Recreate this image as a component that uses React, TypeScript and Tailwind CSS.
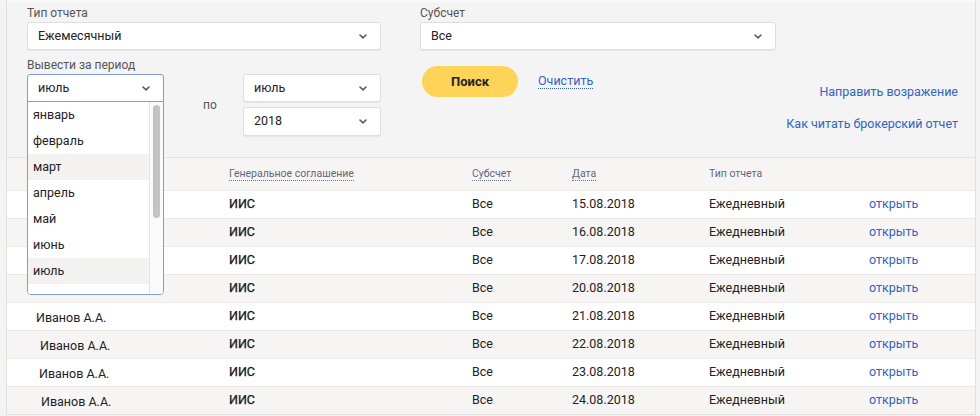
import React from 'react';

const Chevron: React.FC = () => (
  <svg width="8" height="5" viewBox="0 0 8 5" className="shrink-0">
    <path d="M1 1l3 2.8L7 1" fill="none" stroke="#5a5a5a" strokeWidth="1.6" strokeLinecap="round" strokeLinejoin="round" />
  </svg>
);

interface SelectProps {
  value: string;
  className?: string;
  open?: boolean;
}

const Select: React.FC<SelectProps> = ({ value, className = '', open }) => (
  <div
    className={
      'flex items-center justify-between bg-white pl-[10px] pr-[13px] text-[12.5px] text-[#222] ' +
      (open
        ? 'border border-[#7d9dd3] rounded-t-[3px] '
        : 'border border-[#dedede] rounded-[3px] shadow-[0_1px_1px_rgba(0,0,0,0.06)] ') +
      className
    }
  >
    <span>{value}</span>
    <Chevron />
  </div>
);

const months = [
  { name: 'январь', hl: false },
  { name: 'февраль', hl: false },
  { name: 'март', hl: true },
  { name: 'апрель', hl: false },
  { name: 'май', hl: false },
  { name: 'июнь', hl: false },
  { name: 'июль', hl: true },
  { name: 'август', hl: false },
];

const rows = [
  { name: 'Иванов А.А.', pad: 'pl-[29px]', date: '15.08.2018' },
  { name: 'Иванов А.А.', pad: 'pl-[29px]', date: '16.08.2018' },
  { name: 'Иванов А.А.', pad: 'pl-[29px]', date: '17.08.2018' },
  { name: 'Иванов А.А.', pad: 'pl-[29px]', date: '20.08.2018' },
  { name: 'Иванов А.А.', pad: 'pl-[29px]', date: '21.08.2018' },
  { name: 'Иванов А.А.', pad: 'pl-[33px]', date: '22.08.2018' },
  { name: 'Иванов А.А.', pad: 'pl-[32px]', date: '23.08.2018' },
  { name: 'Иванов А.А.', pad: 'pl-[34px]', date: '24.08.2018' },
];

const cols = 'grid grid-cols-[222px_243px_100px_137px_160px_1fr] items-center';

const App: React.FC = () => {
  return (
    <div className="w-[980px] h-[416px] overflow-hidden bg-[#f3f3f3] font-['Roboto','Liberation_Sans',sans-serif]">
      <div className="ml-[6px] w-[970px] border-x border-[#e0e0e0] bg-[#f4f4f4]">
        {/* filters */}
        <div className="flex h-[157px] pl-[20px] pt-[3px] border-t-[2px] border-[#fafafa]">
          <div className="w-[354px] mr-[39px]">
            <div className="text-[12px] leading-[16px] text-[#555]">Тип отчета</div>
            <Select value="Ежемесячный" className="mt-[1px] h-[28px]" />
            <div className="mt-[7px] text-[12px] leading-[16px] text-[#555]">Вывести за период</div>
            <div className="flex mt-[1px]">
              <div className="relative w-[137px]">
                <Select value="июль" open className="h-[28px]" />
                <div className="absolute left-0 top-[27px] z-10 w-[137px] h-[194px] overflow-hidden rounded-b-[4px] border border-[#7d9dd3] bg-white flex">
                  <div className="flex-1">
                    {months.map((m) => (
                      <div
                        key={m.name}
                        className={
                          'h-[26px] pl-[5px] flex items-center text-[12.5px] text-[#222] ' +
                          (m.hl ? 'bg-[#f4f2f1]' : 'bg-white')
                        }
                      >
                        {m.name}
                      </div>
                    ))}
                  </div>
                  <div className="w-[14px] border-l border-[#e4e4e4] bg-[#fafafa] pt-[3px] pl-[3px]">
                    <div className="w-[7px] h-[113px] rounded-full bg-[#c3c3c3]" />
                  </div>
                </div>
              </div>
              <div className="ml-[39px] mt-[23px] text-[12px] leading-[16px] text-[#555]">по</div>
              <div className="ml-auto w-[138px] flex flex-col gap-[5px]">
                <Select value="июль" className="h-[28px]" />
                <Select value="2018" className="h-[29px]" />
              </div>
            </div>
          </div>

          <div className="w-[356px]">
            <div className="text-[12px] leading-[16px] text-[#555]">Субсчет</div>
            <Select value="Все" className="mt-[1px] h-[28px]" />
            <div className="mt-[16px] flex items-center">
              <button className="ml-[2px] w-[96px] h-[31px] rounded-full bg-[#fdd458] text-[13px] font-bold text-[#222]">
                Поиск
              </button>
              <span className="ml-[20px] text-[12.5px] text-[#3563c9] border-b border-dotted border-[#3563c9] leading-[15px] -mt-[2px]">
                Очистить
              </span>
            </div>
          </div>

          <div className="flex-1 flex flex-col items-end pr-[17px] pt-[77px] gap-[12px] text-[12.5px] leading-[20px] text-[#2f63c9]">
            <span>Направить возражение</span>
            <span>Как читать брокерский отчет</span>
          </div>
        </div>

        {/* table */}
        <div className="border-t border-[#e4e2e0]">
          <div className={cols + ' h-[32px] bg-[#f7f5f4] text-[10.5px] text-[#5f6678]'}>
            <div />
            <div>
              <span className="border-b border-dotted border-[#6a7590]">Генеральное соглашение</span>
            </div>
            <div>
              <span className="border-b border-dotted border-[#6a7590]">Субсчет</span>
            </div>
            <div>
              <span className="border-b border-dotted border-[#6a7590]">Дата</span>
            </div>
            <div>Тип отчета</div>
            <div />
          </div>
          {rows.map((r, i) => (
            <div
              key={r.date}
              className={
                cols +
                ' h-[28px] border-t border-[#ebe8e6] text-[12.5px] text-[#222] ' +
                (i % 2 === 0 ? 'bg-white' : 'bg-[#f7f5f4]')
              }
            >
              <div className={r.pad + ' pt-[3px]'}>{r.name}</div>
              <div className="text-[#111] [-webkit-text-stroke:0.25px_#111]">ИИС</div>
              <div>Все</div>
              <div>{r.date}</div>
              <div>Ежедневный</div>
              <div className="text-[#2f63c9]">открыть</div>
            </div>
          ))}
          <div className="border-t border-[#e0dedc]" />
        </div>
      </div>
    </div>
  );
};

export default App;
